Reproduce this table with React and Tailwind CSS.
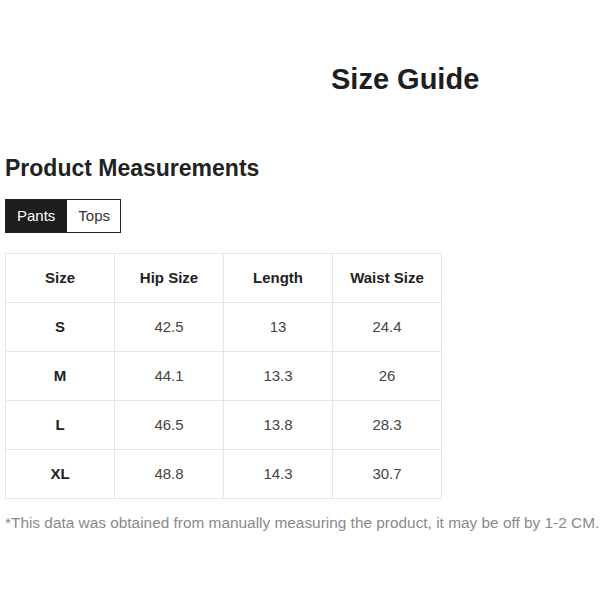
import { useState } from "react";

const rows = [
  ["S", "42.5", "13", "24.4"],
  ["M", "44.1", "13.3", "26"],
  ["L", "46.5", "13.8", "28.3"],
  ["XL", "48.8", "14.3", "30.7"],
];

export default function App() {
  const [tab, setTab] = useState("Pants");

  return (
    <div
      className="w-[600px] h-[600px] bg-white text-[#222] overflow-hidden"
      style={{ fontFamily: '"Liberation Sans", Arial, sans-serif' }}
    >
      {/* ================= TITLE ================= */}
      <h1 className="pt-[63px] pl-[331px] text-[29px] font-bold leading-[32px] text-[#1e1e1e]">
        Size Guide
      </h1>

      {/* ================= MEASUREMENTS ================= */}
      <div className="pl-[5px] pt-[59px]">
        <h2 className="text-[23px] font-bold leading-[28px]">Product Measurements</h2>

        {/* TABS */}
        <div className="mt-[17px] flex w-fit border border-[#222]">
          {["Pants", "Tops"].map((t) => (
            <button
              key={t}
              onClick={() => setTab(t)}
              className={
                tab === t
                  ? "h-[32px] pl-[11px] pr-[12px] text-[15px] bg-[#1e1e1e] text-white"
                  : "h-[32px] pl-[11px] pr-[10px] text-[15px] bg-white text-[#333]"
              }
            >
              {t}
            </button>
          ))}
        </div>

        {/* TABLE */}
        <table className="mt-[20px] w-[437px] border-collapse text-[15px] table-fixed">
          <thead>
            <tr className="h-[49px]">
              {["Size", "Hip Size", "Length", "Waist Size"].map((h) => (
                <th key={h} className="border border-[#e6e6e6] font-bold text-center">
                  {h}
                </th>
              ))}
            </tr>
          </thead>
          <tbody>
            {rows.map((r) => (
              <tr key={r[0]} className="h-[49px]">
                {r.map((c, i) => (
                  <td
                    key={i}
                    className={
                      i === 0
                        ? "border border-[#e6e6e6] text-center font-bold"
                        : "border border-[#e6e6e6] text-center text-[#444]"
                    }
                  >
                    {c}
                  </td>
                ))}
              </tr>
            ))}
          </tbody>
        </table>

        <p className="mt-[12px] text-[15.4px] text-[#8a8a8a] whitespace-nowrap">
          *This data was obtained from manually measuring the product, it may be off by 1-2 CM.
        </p>
      </div>
    </div>
  );
}
